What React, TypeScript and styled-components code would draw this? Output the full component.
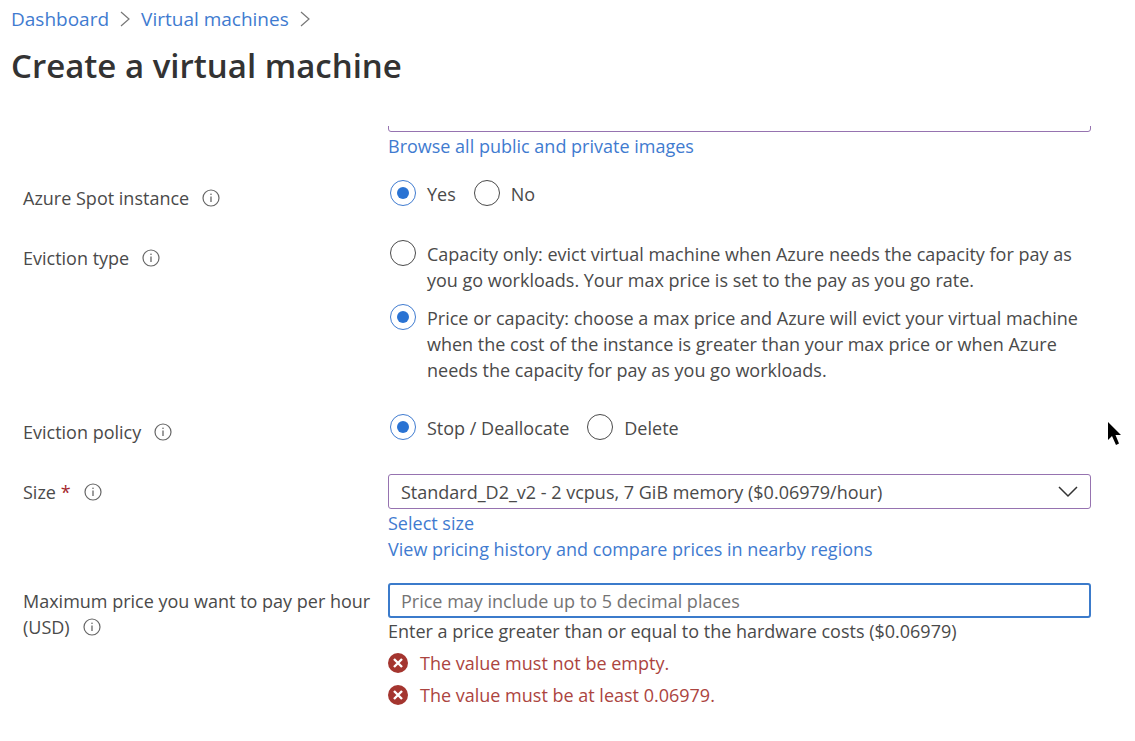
import React from "react";
import styled, { createGlobalStyle } from "styled-components";

const GlobalStyle = createGlobalStyle`
  *, *::before, *::after { box-sizing: border-box; }
  body {
    margin: 0;
    background: #fff;
    color: #4a4a4a;
    font: 400 18px/26px "Open Sans", "Noto Sans", sans-serif;
  }
`;

const Page = styled.main`
  position: relative;
  padding: 6px 0 32px;
`;

const Header = styled.header`
  padding: 0 11px;
`;

const Breadcrumb = styled.nav`
  display: flex;
  align-items: center;
  gap: 10px;
  font-size: 19px;
`;

const Link = styled.a`
  color: #3f7bd0;
  text-decoration: none;
  &:hover { text-decoration: underline; }
`;

const Title = styled.h1`
  margin: 12px 0 0;
  font-size: 33px;
  font-weight: 600;
  line-height: 44px;
  color: #333;
`;

const Form = styled.form`
  margin-top: 38px;
  padding: 0 44px 0 23px;
`;

const Row = styled.div<{ $gap: number }>`
  display: grid;
  grid-template-columns: 365px minmax(0, 1fr);
  margin-bottom: ${(p) => p.$gap}px;
`;

const LabelCell = styled.div`
  padding: 5px 12px 0 0;
`;

const InfoButton = styled.button`
  display: inline-flex;
  margin: 0 0 0 13px;
  padding: 0;
  border: 0;
  background: none;
  color: #666;
  vertical-align: -2px;
`;

const Required = styled.span`
  color: #a4262c;
`;

const FieldCell = styled.div`
  display: flex;
  flex-direction: column;
  align-items: flex-start;
`;

const ClippedField = styled.div`
  display: flex;
  align-items: flex-end;
  width: 100%;
  height: 6px;
  margin-bottom: 1px;
  overflow: hidden;
`;

const TextBox = styled.input<{ $active?: boolean }>`
  flex: none;
  width: 100%;
  height: 35px;
  padding: 0 ${(p) => (p.$active ? 11 : 12)}px;
  border: ${(p) => (p.$active ? "2px solid #3b7bcb" : "1px solid #9673b0")};
  border-radius: 3px;
  outline: 0;
  background: #fff;
  color: inherit;
  font: inherit;
  &::placeholder { color: #747474; opacity: 1; }
`;

const SelectWrap = styled.div`
  position: relative;
  width: 100%;
  height: 35px;
  margin-bottom: 1px;
`;

const Select = styled.select`
  appearance: none;
  width: 100%;
  height: 100%;
  padding: 0 48px 0 12px;
  border: 1px solid #9673b0;
  border-radius: 3px;
  background: #fff;
  color: inherit;
  font: inherit;
`;

const SelectArrow = styled.svg`
  position: absolute;
  top: 12px;
  right: 13px;
  pointer-events: none;
`;

const RadioGroup = styled.div<{ $stacked?: boolean }>`
  display: flex;
  flex-direction: ${(p) => (p.$stacked ? "column" : "row")};
  gap: ${(p) => (p.$stacked ? 11 : 18)}px;
  padding-left: 2px;
`;

const RadioLabel = styled.label`
  display: flex;
  align-items: flex-start;
  gap: 11px;
`;

const RadioText = styled.span`
  padding-top: 1px;
`;

const Radio = styled.input`
  appearance: none;
  display: grid;
  place-items: center;
  flex: none;
  width: 26px;
  height: 26px;
  margin: 0;
  border: 1px solid #4a4a4a;
  border-radius: 50%;
  &:checked { border-color: #3f7bd0; }
  &:checked::before {
    content: "";
    width: 12px;
    height: 12px;
    border-radius: 50%;
    background: #2a73d3;
  }
`;

const Errors = styled.ul`
  display: grid;
  gap: 6px;
  margin: 6px 0 0;
  padding: 0;
  list-style: none;
`;

const ErrorItem = styled.li`
  display: flex;
  align-items: center;
  gap: 12px;
  color: #ac4440;
`;

const Pointer = styled.svg`
  position: absolute;
  top: 421px;
  right: 10px;
  pointer-events: none;
`;

const Crumb = () => (
  <svg width="12" height="16" viewBox="0 0 12 16" fill="none" stroke="#777" strokeWidth="1.2" aria-hidden="true">
    <path d="M2 1 10 8l-8 7" />
  </svg>
);

const Info = ({ about }: { about: string }) => (
  <InfoButton type="button" aria-label={`About ${about}`}>
    <svg width="18" height="18" viewBox="0 0 18 18" fill="none" stroke="currentColor">
      <circle cx="9" cy="9" r="8" strokeWidth="1.2" />
      <path d="M9 7.500v5.500" strokeWidth="1.3" />
      <circle cx="9" cy="5.300" r=".8" fill="currentColor" stroke="none" />
    </svg>
  </InfoButton>
);

const ErrorMessage = ({ children }: { children: React.ReactNode }) => (
  <ErrorItem>
    <svg width="20" height="20" viewBox="0 0 20 20" aria-hidden="true">
      <circle cx="10" cy="10" r="10" fill="#a4352f" />
      <path d="m6 6 8 8M14 6l-8 8" stroke="#fff" strokeWidth="2.4" />
    </svg>
    {children}
  </ErrorItem>
);

type Option = { text: string; checked?: boolean };

const RadioRow = ({ id, label, options, stacked }: { id: string; label: string; options: Option[]; stacked?: boolean }) => (
  <Row $gap={stacked ? 31 : 29}>
    <LabelCell>
      <span id={`${id}-label`}>{label}</span>
      <Info about={label} />
    </LabelCell>
    <RadioGroup role="radiogroup" aria-labelledby={`${id}-label`} $stacked={stacked}>
      {options.map((o) => (
        <RadioLabel key={o.text}>
          <Radio type="radio" name={id} defaultChecked={o.checked} />
          <RadioText>{o.text}</RadioText>
        </RadioLabel>
      ))}
    </RadioGroup>
  </Row>
);

export default function App() {
  return (
    <Page>
      <GlobalStyle />
      <Header>
        <Breadcrumb aria-label="Breadcrumb">
          <Link href="#dashboard">Dashboard</Link>
          <Crumb />
          <Link href="#virtual-machines">Virtual machines</Link>
          <Crumb />
        </Breadcrumb>
        <Title>Create a virtual machine</Title>
      </Header>

      <Form>
        <Row $gap={21}>
          <LabelCell />
          <FieldCell>
            <ClippedField>
              <TextBox type="text" aria-label="Image" />
            </ClippedField>
            <Link href="#images">Browse all public and private images</Link>
          </FieldCell>
        </Row>

        <RadioRow
          id="spot"
          label="Azure Spot instance"
          options={[{ text: "Yes", checked: true }, { text: "No" }]}
        />
        <RadioRow
          id="eviction-type"
          label="Eviction type"
          stacked
          options={[
            {
              text: "Capacity only: evict virtual machine when Azure needs the capacity for pay as you go workloads. Your max price is set to the pay as you go rate.",
            },
            {
              text: "Price or capacity: choose a max price and Azure will evict your virtual machine when the cost of the instance is greater than your max price or when Azure needs the capacity for pay as you go workloads.",
              checked: true,
            },
          ]}
        />
        <RadioRow
          id="eviction-policy"
          label="Eviction policy"
          options={[{ text: "Stop / Deallocate", checked: true }, { text: "Delete" }]}
        />

        <Row $gap={21}>
          <LabelCell>
            <label htmlFor="size">
              Size <Required>*</Required>
            </label>
            <Info about="Size" />
          </LabelCell>
          <FieldCell>
            <SelectWrap>
              <Select id="size" required>
                <option>Standard_D2_v2 - 2 vcpus, 7 GiB memory ($0.06979/hour)</option>
              </Select>
              <SelectArrow width="20" height="12" viewBox="0 0 20 12" fill="none" stroke="#333" strokeWidth="1.5">
                <path d="m1 1 9 9 9-9" />
              </SelectArrow>
            </SelectWrap>
            <Link href="#select-size">Select size</Link>
            <Link href="#pricing">View pricing history and compare prices in nearby regions</Link>
          </FieldCell>
        </Row>

        <Row $gap={0}>
          <LabelCell>
            <label htmlFor="price">Maximum price you want to pay per hour (USD)</label>
            <Info about="Maximum price" />
          </LabelCell>
          <FieldCell>
            <TextBox
              id="price"
              type="text"
              $active
              placeholder="Price may include up to 5 decimal places"
              aria-describedby="price-help price-errors"
            />
            <span id="price-help">Enter a price greater than or equal to the hardware costs ($0.06979)</span>
            <Errors id="price-errors">
              <ErrorMessage>The value must not be empty.</ErrorMessage>
              <ErrorMessage>The value must be at least 0.06979.</ErrorMessage>
            </Errors>
          </FieldCell>
        </Row>
      </Form>

      <Pointer width="18" height="26" viewBox="0 0 18 26" aria-hidden="true">
        <path d="M1 1v18l4-4 4 9 3-1.500-3.500-8.500H14z" fill="#000" />
      </Pointer>
    </Page>
  );
}
